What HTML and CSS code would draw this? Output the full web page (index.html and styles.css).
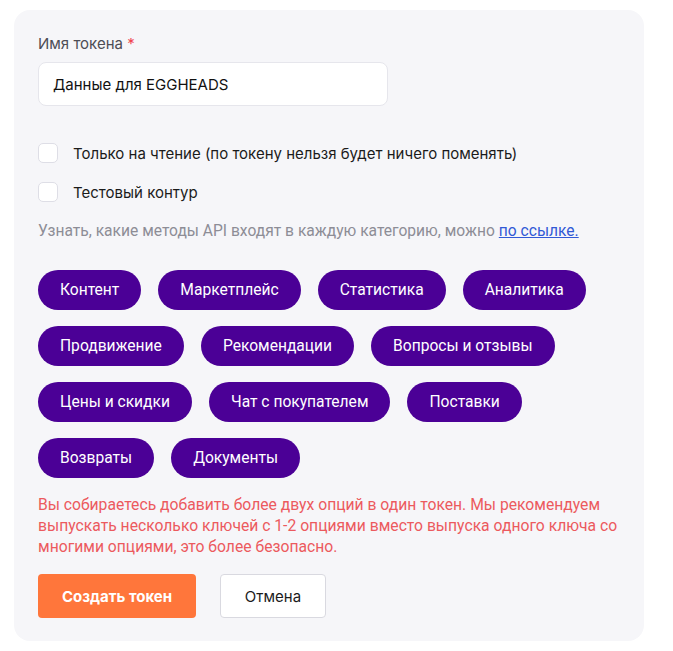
FILE: index.html
```html
<!DOCTYPE html>
<html lang="ru">
<head>
<meta charset="utf-8">
<link rel="stylesheet" href="styles.css">
</head>
<body>
<div class="card">
  <label class="field-label">Имя токена <span class="req">*</span></label>
  <div class="input">Данные для EGGHEADS</div>

  <div class="checks">
    <div class="check"><span class="box"></span><span>Только на чтение (по токену нельзя будет ничего поменять)</span></div>
    <div class="check"><span class="box"></span><span>Тестовый контур</span></div>
  </div>

  <p class="info">Узнать, какие методы API входят в каждую категорию, можно <a href="#">по ссылке.</a></p>

  <div class="chips">
    <span class="chip">Контент</span>
    <span class="chip">Маркетплейс</span>
    <span class="chip">Статистика</span>
    <span class="chip">Аналитика</span>
    <span class="chip">Продвижение</span>
    <span class="chip">Рекомендации</span>
    <span class="chip">Вопросы и отзывы</span>
    <span class="chip">Цены и скидки</span>
    <span class="chip">Чат с покупателем</span>
    <span class="chip">Поставки</span>
    <span class="chip">Возвраты</span>
    <span class="chip">Документы</span>
  </div>

  <p class="warn">Вы собираетесь добавить более двух опций в один токен. Мы рекомендуем выпускать несколько ключей с 1-2 опциями вместо выпуска одного ключа со многими опциями, это более безопасно.</p>

  <div class="actions">
    <button class="btn btn-primary">Создать токен</button>
    <button class="btn btn-secondary">Отмена</button>
  </div>
</div>
</body>
</html>
```

FILE: styles.css
```css
* { box-sizing: border-box; }
html, body { margin: 0; padding: 0; background: #ffffff; }
body {
  font-family: Inter, "Noto Sans", sans-serif;
  color: #1f1f1f;
  padding: 10px 0 0 14px;
}
.card {
  width: 630px;
  background: #f6f6f9;
  border-radius: 16px;
  padding: 24px 24px 23px 24px;
  display: flex;
  flex-direction: column;
}
.field-label {
  font-size: 15px;
  line-height: 20px;
  color: #4d4d55;
}
.req { color: #f0454e; }
.input {
  margin-top: 8px;
  width: 350px;
  height: 44px;
  background: #ffffff;
  border: 1px solid #e6e6ec;
  border-radius: 8px;
  padding: 0 14px;
  display: flex;
  align-items: center;
  font-size: 15px;
  color: #111111;
}
.checks {
  margin-top: 35px;
  display: flex;
  flex-direction: column;
  gap: 15px;
}
.check {
  display: flex;
  align-items: center;
  gap: 15px;
  height: 24px;
  font-size: 15px;
  color: #1b1b1b;
}
.box {
  width: 20px;
  height: 20px;
  background: #ffffff;
  border: 1px solid #dedee6;
  border-radius: 5px;
  flex: none;
}
.info {
  margin: 17px 0 0 0;
  font-family: Roboto, sans-serif;
  font-size: 15.6px;
  line-height: 20px;
  color: #8d8d96;
}
.info a { color: #3159d6; text-decoration: underline; }
.chips {
  margin-top: 29px;
  display: flex;
  flex-wrap: wrap;
  gap: 16px 17px;
  width: 582px;
}
.chip {
  height: 40px;
  padding: 0 22px;
  border-radius: 20px;
  background: #4b0096;
  color: #ffffff;
  font-family: Roboto, sans-serif;
  font-size: 15.6px;
  display: flex;
  align-items: center;
}
.warn {
  margin: 16px 0 0 0;
  font-family: Roboto, sans-serif;
  font-size: 15.7px;
  line-height: 21px;
  color: #ec5a5e;
}
.actions {
  margin-top: 17px;
  display: flex;
  gap: 24px;
}
.btn {
  height: 44px;
  border-radius: 4px;
  font-family: Inter, sans-serif;
  font-size: 15px;
  padding: 0;
  cursor: pointer;
}
.btn-primary {
  width: 158px;
  background: #ff763b;
  border: none;
  color: #ffffff;
  font-weight: 700;
}
.btn-secondary {
  width: 106px;
  background: #ffffff;
  border: 1px solid #d9d9e0;
  color: #1b1b1b;
}
```
